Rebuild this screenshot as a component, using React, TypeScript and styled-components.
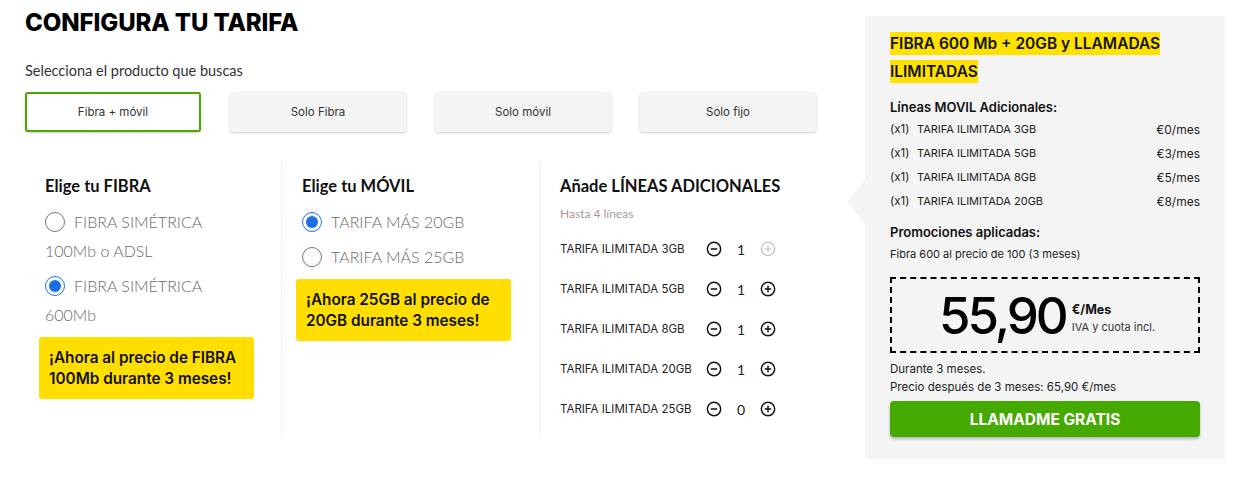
import React, { useState } from 'react'
import styled, { createGlobalStyle } from 'styled-components'
import { CircleMinus, CirclePlus } from 'lucide-react'

const GlobalStyle = createGlobalStyle`
  body {
    margin: 0;
    background: #fff;
    font-family: 'Lato', sans-serif;
    color: #222;
  }
`

const POP = `'Inter', 'Noto Sans', sans-serif`
const MULI = `'Lato', 'Noto Sans', sans-serif`

const tabs = ['Fibra + móvil', 'Solo Fibra', 'Solo móvil', 'Solo fijo']

const lines = [
  { name: 'TARIFA ILIMITADA 3GB', qty: 1, price: 0 },
  { name: 'TARIFA ILIMITADA 5GB', qty: 1, price: 3 },
  { name: 'TARIFA ILIMITADA 8GB', qty: 1, price: 5 },
  { name: 'TARIFA ILIMITADA 20GB', qty: 1, price: 8 },
  { name: 'TARIFA ILIMITADA 25GB', qty: 0, price: 10 },
]

const App = function () {
  const [tab, setTab] = useState(0)
  const [fibra, setFibra] = useState(1) // fibra seleccionada
  const [movil, setMovil] = useState(0) // móvil seleccionado
  const [qtys, setQtys] = useState(lines.map((l) => l.qty))

  const total = qtys.reduce((a, b) => a + b, 0)

  // cambiar cantidad de una línea (máximo 4 en total)
  const changeQty = function (index: number, delta: number) {
    const next = [...qtys]
    const value = next[index] + delta
    if (value < 0 || (delta > 0 && total >= 4)) {
      return
    }
    next[index] = value
    setQtys(next)
  }

  return (
    <Page>
      <GlobalStyle />
      <Main>
        <Title>CONFIGURA TU TARIFA</Title>
        <Subtitle>Selecciona el producto que buscas</Subtitle>
        <Tabs>
          {tabs.map((t, i) => (
            <Tab key={t} active={i === tab} onClick={() => setTab(i)}>{t}</Tab>
          ))}
        </Tabs>
        <Columns>
          <Column>
            <ColumnTitle>Elige tu FIBRA</ColumnTitle>
            <RadioItem>
              <Radio type="radio" name="fibra" checked={fibra === 0} onChange={() => setFibra(0)} />
              FIBRA SIMÉTRICA 100Mb o ADSL
            </RadioItem>
            <RadioItem>
              <Radio type="radio" name="fibra" checked={fibra === 1} onChange={() => setFibra(1)} />
              FIBRA SIMÉTRICA 600Mb
            </RadioItem>
            <Promo>¡Ahora al precio de FIBRA 100Mb durante 3 meses!</Promo>
          </Column>
          <Column bordered>
            <ColumnTitle>Elige tu MÓVIL</ColumnTitle>
            <RadioItem>
              <Radio type="radio" name="movil" checked={movil === 0} onChange={() => setMovil(0)} />
              TARIFA MÁS 20GB
            </RadioItem>
            <RadioItem>
              <Radio type="radio" name="movil" checked={movil === 1} onChange={() => setMovil(1)} />
              TARIFA MÁS 25GB
            </RadioItem>
            <Promo>¡Ahora 25GB al precio de 20GB durante 3 meses!</Promo>
          </Column>
          <Column bordered>
            <ColumnTitle lines>Añade LÍNEAS ADICIONALES</ColumnTitle>
            <Hint>Hasta 4 líneas</Hint>
            {lines.map((l, i) => (
              <LineRow key={l.name}>
                <LineName>{l.name}</LineName>
                <QtyButton onClick={() => changeQty(i, -1)}>
                  <CircleMinus size={16} strokeWidth={2.2} />
                </QtyButton>
                <Qty>{qtys[i]}</Qty>
                <QtyButton disabled={i === 0} onClick={() => changeQty(i, 1)}>
                  <CirclePlus size={16} strokeWidth={i === 0 ? 1.6 : 2.2} />
                </QtyButton>
              </LineRow>
            ))}
          </Column>
        </Columns>
      </Main>
      <Summary>
        <Pointer />
        <SummaryTitle><Highlight>FIBRA 600 Mb + 20GB y LLAMADAS ILIMITADAS</Highlight></SummaryTitle>
        <SummaryHeading>Líneas MOVIL Adicionales:</SummaryHeading>
        {lines.slice(0, 4).map((l) => (
          <SummaryRow key={l.name}>
            <SummaryQty>(x1)</SummaryQty>
            <SummaryName>{l.name}</SummaryName>
            <SummaryPrice>€{l.price}/mes</SummaryPrice>
          </SummaryRow>
        ))}
        <SummaryHeading spaced>Promociones aplicadas:</SummaryHeading>
        <SmallText>Fibra 600 al precio de 100 (3 meses)</SmallText>
        <PriceBox>
          <PriceBig>55,90</PriceBig>
          <PriceSide>
            <PriceUnit>€/Mes</PriceUnit>
            <PriceNote>IVA y cuota incl.</PriceNote>
          </PriceSide>
        </PriceBox>
        <Notes>
          <div>Durante 3 meses.</div>
          <div>Precio después de 3 meses: 65,90 €/mes</div>
        </Notes>
        <CallButton>LLAMADME GRATIS</CallButton>
      </Summary>
    </Page>
  )
}

export default App

const Page = styled.div`
  display: flex;
  align-items: flex-start;
  padding: 0 25px;
  width: 1251px;
  box-sizing: border-box;
`

const Main = styled.div`
  width: 815px;
  flex-shrink: 0;
`

const Title = styled.h1`
  margin: 8px 0 0;
  font-family: ${POP};
  font-weight: 800;
  font-size: 24px;
  line-height: 30px;
  letter-spacing: -0.1px;
  color: #000;
`

const Subtitle = styled.p`
  margin: 24px 0 0;
  font-family: ${MULI};
  font-weight: 400;
  font-size: 14.5px;
  line-height: 18px;
  color: #333;
`

const Tabs = styled.div`
  display: flex;
  gap: 29px;
  margin-top: 12px;
`

const Tab = styled('button')<{ active: boolean }>`
  width: 176px;
  height: 40px;
  box-sizing: border-box;
  border-radius: 3px;
  border: 2px solid ${(p) => (p.active ? '#4ca800' : '#f4f4f4')};
  background: ${(p) => (p.active ? '#fff' : '#f4f4f4')};
  box-shadow: 0 1px 3px rgba(0, 0, 0, 0.2);
  font-family: ${POP};
  font-size: 11.5px;
  color: #333;
  cursor: pointer;
`

const Columns = styled.div`
  display: grid;
  grid-template-columns: 256px 258px 301px;
  margin-top: 29px;
  height: 276px;
`

const Column = styled('div')<{ bordered?: boolean }>`
  padding: 13px 0 0 20px;
  border-left: ${(p) => (p.bordered ? '1px solid #efefef' : 'none')};
`

const ColumnTitle = styled('h3')<{ lines?: boolean }>`
  margin: 0 0 ${(p) => (p.lines ? '11px' : '9px')};
  font-family: ${MULI};
  font-weight: 700;
  font-size: 16.5px;
  line-height: 24px;
  color: #111;
`

const RadioItem = styled.label`
  display: block;
  margin-bottom: 6px;
  width: 200px;
  font-family: ${MULI};
  font-weight: 300;
  font-size: 16px;
  line-height: 29px;
  color: #6a6a6a;
  cursor: pointer;
`

const Radio = styled.input`
  width: 20px;
  height: 20px;
  margin: 0 9px 0 0;
  vertical-align: -4px;
  accent-color: #1a6fe8;
`

const Promo = styled.div`
  width: 215px;
  box-sizing: border-box;
  margin: 8px 0 0 -6px;
  padding: 10px 10px;
  background: #ffde00;
  border-radius: 3px;
  font-family: ${POP};
  font-weight: 600;
  font-size: 15.3px;
  line-height: 21px;
  color: #111;
`

const Hint = styled.div`
  margin: -3px 0 7px;
  font-family: ${MULI};
  font-size: 12px;
  line-height: 16px;
  color: #a69a94;
`

const LineRow = styled.div`
  display: flex;
  align-items: center;
  height: 40px;
`

const LineName = styled.span`
  width: 146px;
  font-family: ${POP};
  font-size: 11.5px;
  color: #222;
`

const QtyButton = styled.button`
  display: flex;
  padding: 0;
  border: none;
  background: none;
  color: #111;
  cursor: pointer;
  &:disabled {
    color: #bbb;
    cursor: default;
  }
`

const Qty = styled.span`
  width: 38px;
  text-align: center;
  font-family: ${MULI};
  font-size: 14px;
  color: #222;
`

const Summary = styled.aside`
  position: relative;
  width: 360px;
  margin: 16px 0 0 25px;
  box-sizing: border-box;
  padding: 14px 25px 22px;
  background: #f4f4f4;
  font-family: ${POP};
  color: #111;
`

const Pointer = styled.div`
  position: absolute;
  left: -18px;
  top: 164px;
  width: 0;
  height: 0;
  border-top: 22px solid transparent;
  border-bottom: 22px solid transparent;
  border-right: 18px solid #f4f4f4;
`

const SummaryTitle = styled.div`
  font-weight: 600;
  font-size: 15.5px;
  line-height: 28px;
  width: 290px;
`

const Highlight = styled.span`
  background: #ffe100;
  padding: 2px 0;
`

const SummaryHeading = styled('div')<{ spaced?: boolean }>`
  margin-top: ${(p) => (p.spaced ? '9px' : '11px')};
  font-weight: 600;
  font-size: 13px;
  line-height: 20px;
`

const SummaryRow = styled.div`
  display: flex;
  align-items: center;
  height: 24px;
  font-size: 11.5px;
  color: #222;
`

const SummaryQty = styled.span`
  width: 27px;
`

const SummaryName = styled.span`
  flex: 1;
  font-size: 11px;
`

const SummaryPrice = styled.span`
  font-size: 12px;
`

const SmallText = styled.div`
  font-size: 11px;
  line-height: 22px;
  margin-top: 1px;
  color: #222;
`

const PriceBox = styled.div`
  display: flex;
  align-items: center;
  justify-content: center;
  height: 76px;
  box-sizing: border-box;
  margin-top: 12px;
  border: 2px dashed #000;
  padding-left: 4px;
`

const PriceBig = styled.span`
  font-weight: 500;
  font-size: 51px;
  letter-spacing: -3px;
  line-height: 1;
  color: #000;
`

const PriceSide = styled.div`
  display: flex;
  flex-direction: column;
  margin-left: 6px;
  padding-top: 6px;
`

const PriceUnit = styled.span`
  font-weight: 700;
  font-size: 12.5px;
  line-height: 18px;
`

const PriceNote = styled.span`
  font-size: 11px;
  line-height: 16px;
  color: #333;
`

const Notes = styled.div`
  margin-top: 7px;
  font-size: 11.5px;
  line-height: 18px;
  color: #222;
`

const CallButton = styled.button`
  width: 100%;
  height: 36px;
  margin-top: 5px;
  border: none;
  border-radius: 4px;
  background: #45aa00;
  box-shadow: 0 2px 3px rgba(0, 0, 0, 0.25);
  font-family: ${POP};
  font-weight: 700;
  font-size: 15.5px;
  color: #fff;
  cursor: pointer;
`
